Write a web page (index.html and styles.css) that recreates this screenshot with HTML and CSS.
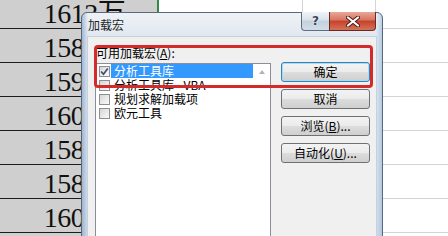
FILE: index.html
```html
<!DOCTYPE html>
<html>
<head>
<meta charset="utf-8">
<link rel="stylesheet" href="styles.css">
</head>
<body>
<div class="screen">
  <div class="sheet">
    <div class="c num">1613万</div><div class="c"></div><div class="c"></div><div class="c"></div>
    <div class="c num">1584万</div><div class="c"></div><div class="c"></div><div class="c"></div>
    <div class="c num">1597万</div><div class="c"></div><div class="c"></div><div class="c"></div>
    <div class="c num">1602万</div><div class="c"></div><div class="c"></div><div class="c"></div>
    <div class="c num">1586万</div><div class="c"></div><div class="c"></div><div class="c"></div>
    <div class="c num">1584万</div><div class="c"></div><div class="c"></div><div class="c"></div>
    <div class="c num">1606万</div><div class="c"></div><div class="c"></div><div class="c"></div>
    <div class="c num"></div><div class="c"></div><div class="c"></div><div class="c"></div>
  </div>

  <div class="dialog">
    <div class="titlebar">
      <span class="title">加载宏</span>
      <div class="caption">
        <div class="cap help">?</div>
        <div class="cap close">
          <svg width="14" height="11" viewBox="0 0 14 11"><path d="M2 1.5 L12 9.5 M12 1.5 L2 9.5" stroke="#4a1a14" stroke-width="4" stroke-linecap="round"/><path d="M2 1.5 L12 9.5 M12 1.5 L2 9.5" stroke="#fff" stroke-width="2.2" stroke-linecap="round"/></svg>
        </div>
      </div>
    </div>
    <div class="client">
      <div class="leftcol">
        <div class="label">可用加载宏(<u>A</u>):</div>
        <div class="listbox">
          <div class="items">
            <div class="item sel"><span class="cb"><svg width="9" height="9" viewBox="0 0 9 9"><path d="M1.2 4.6 L3.4 7.2 L7.8 1.4" fill="none" stroke="#3b4b66" stroke-width="1.6"/></svg></span><span class="txt">分析工具库</span></div>
            <div class="item"><span class="cb"></span><span class="txt">分析工具库 - VBA</span></div>
            <div class="item"><span class="cb"></span><span class="txt">规划求解加载项</span></div>
            <div class="item"><span class="cb"></span><span class="txt">欧元工具</span></div>
          </div>
          <div class="scroll"><span class="arrow"></span></div>
        </div>
      </div>
      <div class="buttons">
        <div class="btn default">确定</div>
        <div class="btn">取消</div>
        <div class="btn">浏览(<u>B</u>)...</div>
        <div class="btn">自动化(<u>U</u>)...</div>
      </div>
      <div class="annot"></div>
    </div>
  </div>
</div>
</body>
</html>
```

FILE: styles.css
```css
html, body {
  margin: 0;
  padding: 0;
}
.screen {
  position: relative;
  width: 448px;
  height: 236px;
  overflow: hidden;
  background: #fff;
}
.sheet {
  display: grid;
  grid-template-columns: 159px 144px 73px 73px;
  grid-template-rows: 29px repeat(7, 34px);
}
.c {
  box-sizing: border-box;
  border-right: 1px solid #d4d4d4;
  border-bottom: 1px solid #d4d4d4;
  background: #fff;
}
.c.num {
  background: #cfcfcf;
  border-bottom-color: #1c1c1c;
  border-right: 2px solid #2f8a45;
  display: flex;
  align-items: flex-end;
  justify-content: center;
  padding-left: 12px;
  font-family: "Liberation Serif", "Noto Sans CJK SC", serif;
  font-size: 28px;
  line-height: 1;
  letter-spacing: -0.5px;
  color: #111;
  overflow: hidden;
  white-space: nowrap;
}
.dialog {
  position: absolute;
  left: 81px;
  top: 12px;
  width: 302px;
  height: 240px;
  box-sizing: border-box;
  border: 1px solid #56687a;
  border-radius: 6px 6px 0 0;
  padding: 0 6px;
  background:
    linear-gradient(to right, rgba(110, 145, 190, 0.55), rgba(110, 145, 190, 0) 6px),
    linear-gradient(to left, rgba(130, 170, 215, 0.45), rgba(130, 170, 215, 0) 6px),
    linear-gradient(to bottom, #eef2f6 0, #e0e8f0 24px, #d3dfeb 100%);
  font-family: "Noto Sans CJK SC", sans-serif;
  font-size: 12px;
  color: #000;
}
.titlebar {
  height: 24px;
  display: flex;
  align-items: flex-start;
}
.title {
  padding-top: 4px;
  line-height: 16px;
  color: #1e1e1e;
}
.caption {
  margin-left: auto;
  margin-top: -1px;
  display: flex;
}
.cap {
  box-sizing: border-box;
  height: 19px;
  border: 1px solid #5f6e7e;
  border-top: none;
  display: flex;
  align-items: center;
  justify-content: center;
}
.help {
  width: 28px;
  border-right: none;
  border-radius: 0 0 0 4px;
  background: linear-gradient(#eef3f8 0, #d8e2ec 45%, #c3d0de 50%, #d2dde8 100%);
  font-family: "DejaVu Sans", sans-serif;
  font-weight: bold;
  font-size: 12px;
  color: #3a4656;
  text-shadow: 0 0 2px #fff;
}
.close {
  width: 47px;
  border-color: #6b2a20;
  border-radius: 0 0 4px 0;
  background: linear-gradient(#e9a898 0, #d8745f 45%, #c4412c 50%, #d5725a 100%);
}
.client {
  position: relative;
  height: 200px;
  background: #f0f0f0;
  display: flex;
  align-items: flex-start;
  padding: 9px 0 0 7px;
  box-shadow: 0 0 0 1px #c4d2e0;
}
.leftcol {
  width: 176px;
}
.label {
  line-height: 14px;
  padding-left: 1px;
}
.listbox {
  margin-top: 3px;
  height: 190px;
  box-sizing: border-box;
  border: 1px solid #8a8e96;
  background: #fff;
  display: flex;
}
.items {
  flex: 1;
  padding-left: 3px;
}
.item {
  height: 14px;
  display: flex;
  align-items: center;
}
.cb {
  box-sizing: border-box;
  width: 11px;
  height: 11px;
  margin-right: 1px;
  border: 1px solid #8e8f8f;
  background: linear-gradient(135deg, #d6d6d6, #fbfbfb);
  display: flex;
  align-items: center;
  justify-content: center;
}
.txt {
  flex: 1;
  height: 14px;
  line-height: 14px;
  padding-left: 3px;
  margin-right: 1px;
  white-space: nowrap;
}
.sel .txt {
  background: #3399ff;
  color: #fff;
}
.scroll {
  width: 16px;
  display: flex;
  justify-content: center;
}
.arrow {
  width: 0;
  height: 0;
  margin-top: 6px;
  border-left: 3.5px solid transparent;
  border-right: 3.5px solid transparent;
  border-bottom: 4px solid #b4b4b4;
}
.buttons {
  margin-left: 10px;
  padding-top: 16px;
  display: flex;
  flex-direction: column;
  gap: 7px;
}
.btn {
  box-sizing: border-box;
  width: 89px;
  height: 20px;
  border: 1px solid #707070;
  border-radius: 3px;
  background: linear-gradient(#f3f3f3 0, #ebebeb 50%, #dddddd 50%, #cfcfcf 100%);
  display: flex;
  align-items: center;
  justify-content: center;
  line-height: 14px;
}
.btn.default {
  border-color: #3c7fb1;
  box-shadow: inset 0 0 0 1px #a6dcf6;
}
.annot {
  position: absolute;
  left: 6px;
  top: 8px;
  width: 279px;
  height: 43px;
  box-sizing: border-box;
  border: 3px solid #d42a2a;
  border-radius: 4px;
}
```
